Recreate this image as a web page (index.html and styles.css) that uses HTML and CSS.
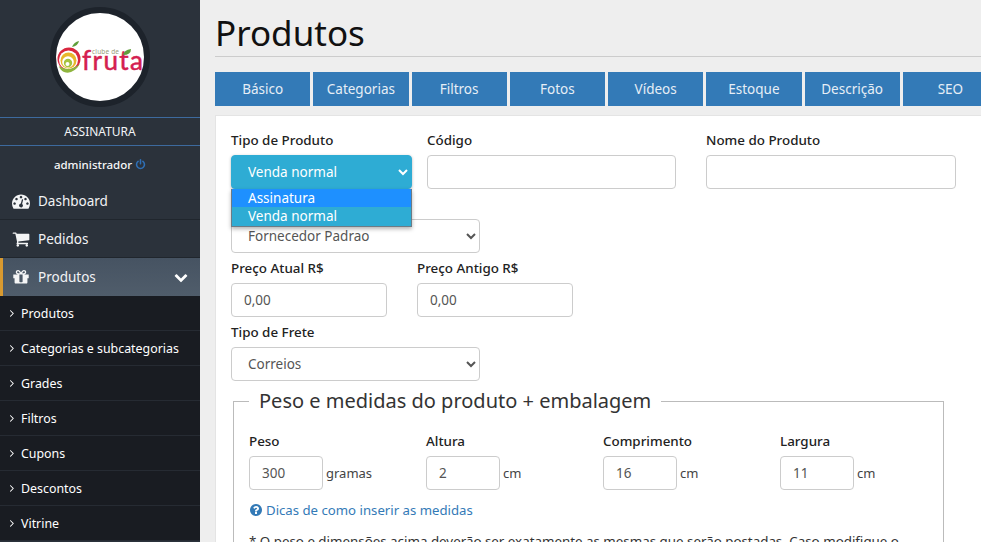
FILE: index.html
```html
<!DOCTYPE html>
<html lang="pt-BR">
<head>
<meta charset="utf-8">
<title>Produtos</title>
<link rel="stylesheet" href="styles.css">
</head>
<body>
<svg class="sprite" aria-hidden="true">
  <symbol id="i-dash" viewBox="0 0 1792 1792"><path d="M384 1152q0-53-37.5-90.5t-90.5-37.5-90.5 37.5-37.5 90.5 37.5 90.5 90.5 37.5 90.5-37.5 37.5-90.5zm192-448q0-53-37.5-90.5t-90.5-37.5-90.5 37.5-37.5 90.5 37.5 90.5 90.5 37.5 90.5-37.5 37.5-90.5zm428 481l101-382q6-26-7.5-48.5t-38.5-29.5-48 6.5-30 39.5l-101 382q-60 5-107 43.5t-63 98.5q-20 77 20 146t117 89 146-20 89-117q16-60-6-117t-72-91zm660-33q0-53-37.5-90.5t-90.5-37.5-90.5 37.5-37.5 90.5 37.5 90.5 90.5 37.5 90.5-37.5 37.5-90.5zm-640-640q0-53-37.5-90.5t-90.5-37.5-90.5 37.5-37.5 90.5 37.5 90.5 90.5 37.5 90.5-37.5 37.5-90.5zm448 192q0-53-37.5-90.5t-90.5-37.5-90.5 37.5-37.5 90.5 37.5 90.5 90.5 37.5 90.5-37.5 37.5-90.5zm320 448q0 261-141 483-19 29-54 29h-1402q-35 0-54-29-141-221-141-483 0-182 71-348t191-286 286-191 348-71 348 71 286 191 191 286 71 348z"/></symbol>
  <symbol id="i-cart" viewBox="0 0 1792 1792"><path d="M704 1536q0 52-38 90t-90 38-90-38-38-90 38-90 90-38 90 38 38 90zm896 0q0 52-38 90t-90 38-90-38-38-90 38-90 90-38 90 38 38 90zm128-1088v512q0 24-16.5 42.5t-40.5 21.5l-1044 122q13 60 13 70 0 16-24 64h920q26 0 45 19t19 45-19 45-45 19h-1024q-26 0-45-19t-19-45q0-11 8-31.5t16-36 21.5-40 15.5-29.5l-177-823h-204q-26 0-45-19t-19-45 19-45 45-19h256q16 0 28.5 6.5t19.5 15.5 13 24.5 8 26 5.5 29.5 4.5 26h1201q26 0 45 19t19 45z"/></symbol>
  <symbol id="i-gift" viewBox="0 0 1792 1792"><path d="M1056 1356v-716h-320v716q0 25 18 38.5t46 13.5h192q28 0 46-13.5t18-38.5zm-456-844h195l-126-161q-26-31-69-31-40 0-68 28t-28 68 28 68 68 28zm688-96q0-40-28-68t-68-28q-43 0-69 31l-125 161h194q40 0 68-28t28-68zm376 256v320q0 14-9 23t-23 9h-96v416q0 40-28 68t-68 28h-1088q-40 0-68-28t-28-68v-416h-96q-14 0-23-9t-9-23v-320q0-14 9-23t23-9h440q-93 0-158.5-65.5t-65.5-158.5 65.5-158.5 158.5-65.5q107 0 168 77l128 165 128-165q61-77 168-77 93 0 158.5 65.5t65.5 158.5-65.5 158.5-158.5 65.5h440q14 0 23 9t9 23z"/></symbol>
  <symbol id="i-down" viewBox="0 0 1792 1792"><path d="M1683 808l-742 741q-19 19-45 19t-45-19l-742-741q-19-19-19-45.5t19-45.5l166-165q19-19 45-19t45 19l531 531 531-531q19-19 45-19t45 19l166 165q19 19 19 45.5t-19 45.5z"/></symbol>
  <symbol id="i-angle" viewBox="0 0 1792 1792"><path d="M1171 960q0 13-10 23l-466 466q-10 10-23 10t-23-10l-50-50q-10-10-10-23t10-23l393-393-393-393q-10-10-10-23t10-23l50-50q10-10 23-10t23 10l466 466q10 10 10 23z"/></symbol>
  <symbol id="i-power" viewBox="0 0 1792 1792"><path d="M1664 896q0 156-61 298t-164 245-245 164-298 61-298-61-245-164-164-245-61-298q0-182 80.5-343t226.5-270q43-32 95.5-25t83.5 50q32 42 24.5 94.5t-49.5 84.5q-98 74-151.5 181t-53.5 228q0 104 40.5 198.5t109.5 163.5 163.5 109.5 198.5 40.5 198.5-40.5 163.5-109.5 109.5-163.5 40.5-198.5q0-121-53.5-228t-151.5-181q-42-32-49.5-84.5t24.5-94.5q31-43 84-50t95 25q146 109 226.5 270t80.5 343zm-640-768v640q0 52-38 90t-90 38-90-38-38-90v-640q0-52 38-90t90-38 90 38 38 90z"/></symbol>
  <symbol id="i-help" viewBox="0 0 1792 1792"><path d="M1024 1376v-192q0-14-9-23t-23-9h-192q-14 0-23 9t-9 23v192q0 14 9 23t23 9h192q14 0 23-9t9-23zm256-672q0-88-55.5-163t-138.5-116-170-41q-243 0-371 213-15 24 8 42l132 100q7 6 19 6 16 0 25-12 53-68 86-92 34-24 86-24 48 0 85.5 26t37.5 59q0 38-20 61t-68 45q-63 28-115.5 86.5t-52.5 125.5v36q0 14 9 23t23 9h192q14 0 23-9t9-23q0-19 21.5-49.5t54.5-49.5q32-18 49-28.5t46-35 44.5-48 28-60.5 12.5-81zm384 192q0 209-103 385.5t-279.5 279.5-385.5 103-385.5-103-279.5-279.5-103-385.5 103-385.5 279.5-279.5 385.5-103 385.5 103 279.5 279.5 103 385.5z"/></symbol>
</svg>
<div class="app">
  <aside class="sidebar">
    <div class="brand">
      <div class="logo-ring">
        <svg class="logo" viewBox="0 0 88 88">
          <path d="M16 34 Q18 29 23 28 Q22 33 16 34Z" fill="#5f9e3a"/>
          <circle cx="13" cy="46" r="11.5" fill="#d9263f"/>
          <circle cx="12.5" cy="47" r="9.5" fill="#fff"/>
          <circle cx="12.5" cy="47.5" r="8" fill="#e8b62c"/>
          <circle cx="12" cy="49" r="5.8" fill="#fff"/>
          <circle cx="12" cy="50" r="4.2" fill="#a4c23e"/>
          <circle cx="11.5" cy="51" r="2" fill="#fff"/>
          <path d="M3 53 Q12 60 24 51 Q17 62 8 59 Q4 57 3 53Z" fill="#8fb53f"/>
          <text class="logo-small" x="36" y="41" textLength="27">clube de</text>
          <text class="logo-word" x="26" y="57" textLength="61">fruta</text>
          <path d="M67 42 Q68 37 75 36 Q75 42 67 42Z" fill="#5f9e3a"/>
        </svg>
      </div>
    </div>
    <div class="plan">ASSINATURA</div>
    <div class="user">administrador <svg class="power"><use href="#i-power"/></svg></div>
    <nav class="menu">
      <a class="item"><svg class="item-icon"><use href="#i-dash"/></svg>Dashboard</a>
      <a class="item"><svg class="item-icon"><use href="#i-cart"/></svg>Pedidos</a>
      <a class="item item-active"><svg class="item-icon"><use href="#i-gift"/></svg>Produtos<svg class="item-caret"><use href="#i-down"/></svg></a>
      <ul class="submenu">
        <li><svg class="angle"><use href="#i-angle"/></svg>Produtos</li>
        <li><svg class="angle"><use href="#i-angle"/></svg>Categorias e subcategorias</li>
        <li><svg class="angle"><use href="#i-angle"/></svg>Grades</li>
        <li><svg class="angle"><use href="#i-angle"/></svg>Filtros</li>
        <li><svg class="angle"><use href="#i-angle"/></svg>Cupons</li>
        <li><svg class="angle"><use href="#i-angle"/></svg>Descontos</li>
        <li><svg class="angle"><use href="#i-angle"/></svg>Vitrine</li>
      </ul>
    </nav>
  </aside>
  <main class="main">
    <h1 class="title">Produtos</h1>
    <div class="tabs">
      <a class="tab">Básico</a>
      <a class="tab">Categorias</a>
      <a class="tab">Filtros</a>
      <a class="tab">Fotos</a>
      <a class="tab">Vídeos</a>
      <a class="tab">Estoque</a>
      <a class="tab">Descrição</a>
      <a class="tab">SEO</a>
    </div>
    <section class="panel">
      <div class="row row-top">
        <div class="field field-type">
          <label class="label">Tipo de Produto</label>
          <select class="control control-open"><option>Venda normal</option></select>
          <div class="dropdown">
            <div class="option option-hover">Assinatura</div>
            <div class="option">Venda normal</div>
          </div>
        </div>
        <div class="field field-code">
          <label class="label">Código</label>
          <input class="control" type="text">
        </div>
        <div class="field field-name">
          <label class="label">Nome do Produto</label>
          <input class="control" type="text">
        </div>
      </div>
      <div class="field field-wide field-supplier">
        <select class="control"><option>Fornecedor Padrao</option></select>
      </div>
      <div class="row row-price">
        <div class="field field-price">
          <label class="label">Preço Atual R$</label>
          <input class="control" type="text" value="0,00">
        </div>
        <div class="field field-price">
          <label class="label">Preço Antigo R$</label>
          <input class="control" type="text" value="0,00">
        </div>
      </div>
      <div class="field field-wide">
        <label class="label">Tipo de Frete</label>
        <select class="control"><option>Correios</option></select>
      </div>
      <fieldset class="box">
        <legend class="box-title">Peso e medidas do produto + embalagem</legend>
        <div class="measures">
          <div class="measure">
            <label class="label">Peso</label>
            <div class="measure-line"><input class="control control-small" type="text" value="300"><span class="unit">gramas</span></div>
          </div>
          <div class="measure">
            <label class="label">Altura</label>
            <div class="measure-line"><input class="control control-small" type="text" value="2"><span class="unit">cm</span></div>
          </div>
          <div class="measure">
            <label class="label">Comprimento</label>
            <div class="measure-line"><input class="control control-small" type="text" value="16"><span class="unit">cm</span></div>
          </div>
          <div class="measure">
            <label class="label">Largura</label>
            <div class="measure-line"><input class="control control-small" type="text" value="11"><span class="unit">cm</span></div>
          </div>
        </div>
        <a class="tip"><svg class="tip-icon"><use href="#i-help"/></svg>Dicas de como inserir as medidas</a>
        <p class="note">* O peso e dimensões acima deverão ser exatamente as mesmas que serão postadas. Caso modifique o</p>
      </fieldset>
    </section>
  </main>
</div>
</body>
</html>
```
FILE: styles.css
```css
* { box-sizing: border-box; }
html, body { margin: 0; height: 100%; overflow: hidden; }
body { font-family: "Noto Sans", "Open Sans", sans-serif; font-size: 14px; color: #333; background: #eee; }
.sprite { display: none; }
.app { display: flex; width: 981px; height: 542px; overflow: hidden; }

.sidebar { flex: 0 0 200px; background: #2b323b; color: #fff; overflow: hidden; }
.brand { height: 117px; padding-top: 7px; display: flex; justify-content: center; }
.logo-ring { width: 100px; height: 100px; border-radius: 50%; background: #fff; border: 6px solid #1d232b; overflow: hidden; }
.logo { display: block; width: 88px; height: 88px; }
.logo-small { font-family: "Noto Sans", sans-serif; font-size: 6.5px; fill: #9a9d7c; }
.logo-word { font-family: "Lato", sans-serif; font-weight: 400; font-size: 26px; fill: #d4204f; stroke: #d4204f; stroke-width: .5px; }

.plan { height: 29px; border-top: 1px solid #3d6a9e; border-bottom: 1px solid #3d6a9e; font-size: 12px; line-height: 27px; text-align: center; color: #f2f4f6; }
.user { height: 36px; display: flex; align-items: center; justify-content: center; gap: 3px; font-size: 11.5px; font-weight: 500; color: #f6f7f8; }
.power { width: 11px; height: 11px; fill: #2f6fb5; }

.menu { display: block; }
.item { display: flex; align-items: center; height: 38px; padding-left: 12px; font-size: 13.5px; color: #f2f3f5; border-bottom: 1px solid #20262d; position: relative; }
.item-icon { width: 18px; height: 18px; fill: #f4f5f6; margin-right: 8px; flex: none; }
.item-active { background: linear-gradient(#465362, #505d6b); border-left: 3px solid #d99a30; padding-left: 9px; border-bottom: 0; }
.item-caret { width: 14px; height: 14px; fill: #fff; margin-left: auto; margin-right: 12px; }
.submenu { list-style: none; margin: 0; padding: 0; background: #191c22; }
.submenu li { display: flex; align-items: center; height: 35px; padding-left: 6px; font-size: 12.4px; color: #fff; border-bottom: 1px solid #262b33; white-space: nowrap; }
.angle { width: 12px; height: 12px; fill: #fff; margin-right: 3px; flex: none; }

.main { flex: 1 1 auto; min-width: 0; padding-left: 15px; overflow: hidden; }
.title { margin: 0; height: 57px; font-size: 35px; font-weight: 400; line-height: 65px; color: #111; border-bottom: 1px solid #ccc; }
.tabs { display: flex; gap: 3px; margin-top: 15px; width: 783px; }
.tab { flex: 1 1 0; height: 34px; background: #337ab7; color: #e6eef6; font-size: 13.5px; line-height: 34px; text-align: center; }

.panel { margin: 9px 0 0; padding: 15px; background: #fff; height: 460px; width: 800px; border: 1px solid #e4e4e4; border-right: 0; border-bottom: 0; }
.row { display: flex; }
.row-top { gap: 15px; height: 73px; }
.row-price { gap: 30px; margin-top: 5px; }
.field { position: relative; display: flex; flex-direction: column; }
.field-type { width: 181px; }
.field-code { width: 249px; }
.field-name { width: 250px; margin-left: 15px; }
.field-wide { width: 249px; }
.field-supplier { margin-top: 15px; }
.field-price { width: 156px; }
.label { display: block; height: 20px; margin-bottom: 5px; font-size: 13.4px; font-weight: 500; line-height: 20px; color: #222; }
.row-top .label { margin-top: -1px; }
.row-price + .field-wide { margin-top: 5px; }
.control { display: block; width: 100%; height: 34px; padding: 6px 12px; font: inherit; font-size: 13.5px; color: #555; background: #fff; border: 1px solid #ccc; border-radius: 4px; outline: 0; }
.control-open { background: #2eacd4; border-color: #2eacd4; color: #fff; box-shadow: 0 1px 3px rgba(0,0,0,.3); }
.dropdown { position: absolute; left: 0; top: 58px; width: 181px; padding-bottom: 1px; background: #2eacd4; border: 1px solid #6d7b85; border-top: 0; box-shadow: 0 2px 4px rgba(0,0,0,.3); z-index: 2; }
.option { height: 18px; padding-left: 16px; font-size: 13.5px; line-height: 18px; color: #fff; }
.option-hover { background: #1e90ff; }

.box { margin: 5px 0 0 2px; padding: 0 15px; width: 711px; min-width: 0; height: 200px; border: 1px solid #bbb; }
.box-title { padding: 0 10px; font-size: 20px; line-height: 30px; color: #333; }
.measures { display: flex; margin-top: 15px; }
.measure { flex: 0 0 177px; }
.measure-line { display: flex; align-items: center; }
.control-small { width: 74px; height: 34px; }
.unit { margin-left: 3px; font-size: 13px; color: #444; }
.tip { display: flex; align-items: center; margin-top: 10px; height: 20px; font-size: 13.2px; color: #337ab7; }
.tip-icon { width: 14px; height: 14px; fill: #337ab7; margin-right: 3px; flex: none; }
.note { margin: 11px 0 0; font-size: 13.35px; line-height: 20px; color: #333; white-space: nowrap; }
```
